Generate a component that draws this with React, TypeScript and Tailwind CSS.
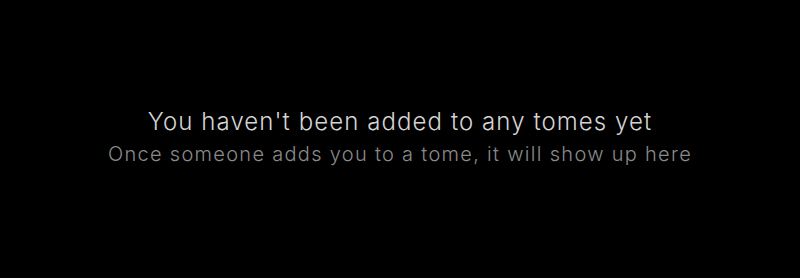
import React from 'react'

const App: React.FC = () => {
  return (
    <div
      className="flex h-[278px] w-full flex-col items-center justify-center bg-black pb-1 text-center"
      style={{ fontFamily: 'Inter, "Noto Sans", sans-serif' }}
    >
      <h2 className="text-2xl leading-[34px] font-light tracking-[1.08px] text-[#d4d4d4]">
        You haven't been added to any tomes yet
      </h2>
      <p className="text-xl leading-[30px] font-light tracking-[1.3px] text-[#8a8a8a]">
        Once someone adds you to a tome, it will show up here
      </p>
    </div>
  )
}

export default App
